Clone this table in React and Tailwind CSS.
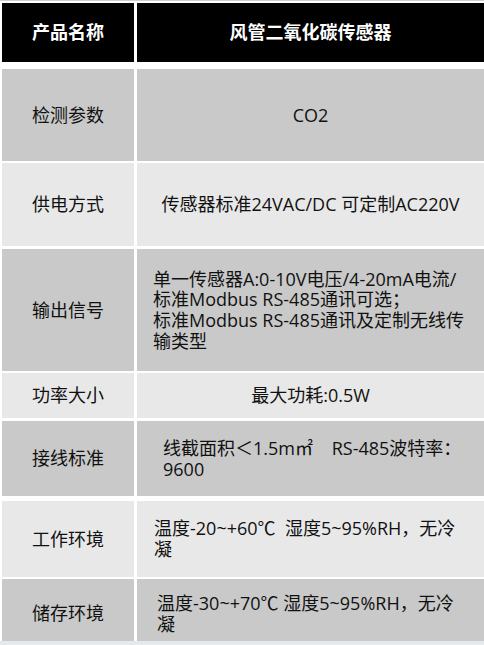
import React from "react";

const font = { fontFamily: '"Open Sans","Noto Sans CJK SC",sans-serif' };

function Row({ className, bg, label, children, rightClass }) {
  return (
    <div className={"flex " + className}>
      <div className={"w-[132px] shrink-0 flex items-center justify-center " + bg}>
        {label}
      </div>
      <div className={"ml-[3px] flex-1 flex items-center " + bg + " " + rightClass}>
        {children}
      </div>
    </div>
  );
}

export default function App() {
  const dark = "bg-[#c9c9c9]";
  const light = "bg-[#e8e8e8]";
  return (
    <div
      className="w-[484px] h-[645px] bg-white overflow-hidden relative text-[18px] leading-[20.6px] text-[#111]"
      style={font}
    >
      <div className="h-px bg-[#cfcfcf]" />
      <div className="pl-[2px]">
        <div className="flex mt-[2px] h-[59px]">
          <div className="w-[132px] shrink-0 flex items-center justify-center bg-black text-white font-bold">
            产品名称
          </div>
          <div className="ml-[3px] flex-1 flex items-center justify-center bg-black text-white font-bold">
            风管二氧化碳传感器
          </div>
        </div>

        <Row className="mt-[7px] h-[92px]" bg={dark} label="检测参数" rightClass="justify-center">
          CO2
        </Row>

        <Row className="mt-[2px] h-[83px]" bg={light} label="供电方式" rightClass="justify-center">
          <span className="whitespace-pre">传感器标准24VAC/DC 可定制AC220V</span>
        </Row>

        <Row className="mt-[3px] h-[122px]" bg={dark} label="输出信号" rightClass="pl-[16px]">
          <div className="whitespace-nowrap">
            单一传感器A:0-10V电压/4-20mA电流/
            <br />
            标准Modbus RS-485通讯可选；
            <br />
            标准Modbus RS-485通讯及定制无线传
            <br />
            输类型
          </div>
        </Row>

        <Row className="mt-[2px] h-[45px]" bg={light} label="功率大小" rightClass="justify-center">
          最大功耗:0.5W
        </Row>

        <Row className="mt-[3px] h-[75px]" bg={dark} label="接线标准" rightClass="pl-[26px]">
          <div className="whitespace-pre">
            {"线截面积＜1.5m㎡    RS-485波特率："}
            <br />
            9600
          </div>
        </Row>

        <Row className="mt-[2px] h-[79px] pt-[3px]" bg={light} label="工作环境" rightClass="pl-[17px]">
          <div className="whitespace-pre">
            {"温度-20~+60℃  湿度5~95%RH，无冷"}
            <br />
            凝
          </div>
        </Row>

        <Row className="mt-[2px] h-[62px]" bg={dark} label={<span className="pt-[7px]">储存环境</span>} rightClass="pl-[20px] pt-[7px]">
          <div className="whitespace-pre">
            {"温度-30~+70℃ 湿度5~95%RH，无冷"}
            <br />
            凝
          </div>
        </Row>
      </div>
      <div className="absolute left-0 right-0 bottom-0 h-[4px] bg-[#e6e9ec]" />
    </div>
  );
}
